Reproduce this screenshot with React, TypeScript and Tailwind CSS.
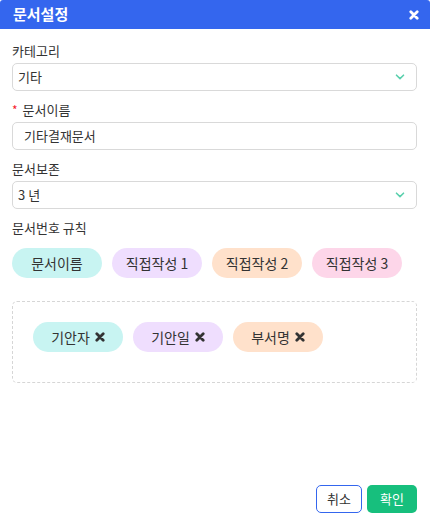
const font = { fontFamily: '"Noto Sans CJK KR", "Noto Sans", sans-serif' };

function Chevron() {
  return (
    <svg width="10" height="6" viewBox="0 0 10 6" fill="none">
      <path d="M1.5 1.2 L5 4.6 L8.5 1.2" stroke="#5ad0ad" strokeWidth="1.6" strokeLinecap="round" strokeLinejoin="round" />
    </svg>
  );
}

function XMark({ color, size }: { color: string; size: number }) {
  return (
    <svg width={size} height={size} viewBox="0 0 10 10" fill="none">
      <path d="M1.8 1.8 L8.2 8.2 M8.2 1.8 L1.8 8.2" stroke={color} strokeWidth="2.8" strokeLinecap="round" />
    </svg>
  );
}

function Label({ children, required }: { children: React.ReactNode; required?: boolean }) {
  return (
    <div className="mt-[9px] flex h-[20px] items-center text-[13px] leading-[20px] text-[#333]">
      {required && <span className="mr-[5px] text-[12px] text-[#f5222d]">*</span>}
      {children}
    </div>
  );
}

function Select({ value }: { value: string }) {
  return (
    <div className="mt-[2px] flex h-[28px] items-center justify-between rounded-[5px] border border-[#d9d9d9] pl-[5px] pr-[11px] text-[13px] text-[#333]">
      <span>{value}</span>
      <Chevron />
    </div>
  );
}

const rulePills = [
  { label: "문서이름", bg: "bg-[#c8f4f2]" },
  { label: "직접작성 1", bg: "bg-[#efdefe]" },
  { label: "직접작성 2", bg: "bg-[#ffe1cb]" },
  { label: "직접작성 3", bg: "bg-[#fdd6e9]" },
];

const selected = [
  { label: "기안자", bg: "bg-[#c8f4f2]" },
  { label: "기안일", bg: "bg-[#efdefe]" },
  { label: "부서명", bg: "bg-[#ffe1cb]" },
];

export default function App() {
  return (
    <div className="flex h-[526px] w-[430px] flex-col bg-white" style={font}>
      <div className="flex h-[29px] items-center justify-between rounded-t-[3px] bg-[#3466ee] pl-[13px] pr-[11px]">
        <span className="text-[15px] font-bold text-white">문서설정</span>
        <XMark color="#ffffff" size={10} />
      </div>

      <div className="flex flex-1 flex-col pl-[12px] pr-[13px] pt-[3px]">
        <Label>카테고리</Label>
        <Select value="기타" />

        <Label required>문서이름</Label>
        <div className="mt-[2px] flex h-[28px] items-center rounded-[5px] border border-[#d9d9d9] pl-[11px] text-[13px] text-[#333]">
          기타결재문서
        </div>

        <Label>문서보존</Label>
        <Select value="3 년" />

        <Label>문서번호 규칙</Label>
        <div className="mt-[10px] flex gap-[10px]">
          {rulePills.map((p) => (
            <div
              key={p.label}
              className={`flex h-[30px] w-[90px] items-center justify-center rounded-full text-[14px] text-[#333] ${p.bg}`}
            >
              {p.label}
            </div>
          ))}
        </div>

        <div className="mt-[23px] flex h-[82px] items-start gap-[10px] rounded-[5px] border border-dashed border-[#d6d6d6] pl-[20px] pt-[20px]">
          {selected.map((p) => (
            <div
              key={p.label}
              className={`flex h-[30px] w-[90px] items-center justify-center gap-[5px] rounded-full text-[14px] text-[#333] ${p.bg}`}
            >
              {p.label}
              <XMark color="#333333" size={10} />
            </div>
          ))}
        </div>

        <div className="mt-auto flex justify-end gap-[5px] pb-[13px]">
          <button className="h-[28px] w-[46px] rounded-[5px] border border-[#3466ee] bg-white text-[13px] text-[#333]">
            취소
          </button>
          <button className="h-[28px] w-[50px] rounded-[5px] bg-[#17bf7d] text-[13px] text-white">
            확인
          </button>
        </div>
      </div>
    </div>
  );
}
